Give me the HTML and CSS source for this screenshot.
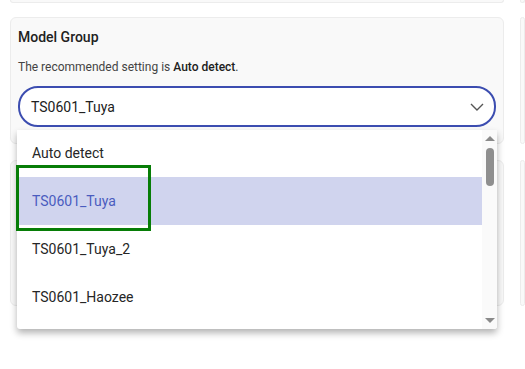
FILE: index.html
```html
<!DOCTYPE html>
<html lang="en">

<head>
    <meta charset="UTF-8">
    <meta name="viewport" content="width=device-width, initial-scale=1.0">
    <title>Model Group</title>
    <link rel="stylesheet" href="styles.css">
</head>

<body>
    <div class="page">
        <div class="card card-top"></div>
        <div class="card card-top"></div>

        <div class="card setting">
            <div class="title">Model Group</div>
            <div class="desc">The recommended setting is <b>Auto detect</b>.</div>
            <div class="select">
                <span>TS0601_Tuya</span>
                <svg class="chevron" width="14" height="8" viewBox="0 0 14 8">
                    <path d="M1 1 L7 7 L13 1" fill="none" stroke="#555" stroke-width="1.4" />
                </svg>
            </div>
            <!-- 下拉菜单 -->
            <div class="dropdown">
                <ul class="options">
                    <li>Auto detect</li>
                    <li class="active">TS0601_Tuya</li>
                    <li>TS0601_Tuya_2</li>
                    <li>TS0601_Haozee</li>
                </ul>
                <div class="scrollbar">
                    <span class="arrow up"></span>
                    <span class="thumb"></span>
                    <span class="arrow down"></span>
                </div>
            </div>
            <div class="focus"></div>
        </div>
        <div class="card"></div>

        <div class="card card-low"></div>
        <div class="card card-low"></div>
    </div>
</body>

</html>
```

FILE: styles.css
```css
* {
    padding: 0;
    margin: 0;
    box-sizing: border-box;
}

body {
    min-height: 100vh;
    background-color: #fff;
    font-family: Roboto, "Liberation Sans", sans-serif;
    color: #212121;
}

.page {
    display: grid;
    grid-template-columns: 494px 1fr;
    column-gap: 16px;
    row-gap: 14px;
    padding: 0 0 70px 10px;
}

.card {
    background-color: #f9f9f9;
    border: 1px solid #ececec;
    border-radius: 6px;
}

/* 上一张卡片只露出底边 */
.card-top {
    height: 3px;
    border-top: none;
    border-radius: 0 0 6px 6px;
}

.card-low {
    height: 146px;
    margin-top: 2px;
}

.setting {
    position: relative;
    padding: 9px 7px 16px 7px;
}

.title {
    font-size: 14px;
    font-weight: 500;
    line-height: 20px;
}

.desc {
    margin-top: 12px;
    font-size: 12px;
    line-height: 16px;
    color: #444;
}

.desc b {
    font-weight: 500;
    color: #212121;
}

.select {
    display: flex;
    align-items: center;
    justify-content: space-between;
    margin-top: 11px;
    height: 41px;
    padding: 0 10px 0 11px;
    background-color: #fff;
    border: 2px solid #3c4db0;
    border-radius: 20px;
    font-size: 14px;
    color: #212121;
}

.chevron {
    display: block;
}

/* 下拉菜单 */
.dropdown {
    position: absolute;
    top: 112px;
    left: 6px;
    width: 480px;
    height: 199px;
    display: flex;
    background-color: #fff;
    border-radius: 0 0 3px 3px;
    box-shadow: 0 4px 7px rgba(0, 0, 0, .3);
    overflow: hidden;
    z-index: 5;
}

.options {
    flex: 1;
    list-style: none;
}

.options li {
    height: 48px;
    line-height: 48px;
    padding-left: 15px;
    font-size: 14px;
    color: #262626;
}

.options li:first-child {
    height: 47px;
    line-height: 46px;
}

.options .active {
    background-color: #d0d4ee;
    color: #4a5cbf;
}

.scrollbar {
    width: 15px;
    display: flex;
    flex-direction: column;
    align-items: center;
    background-color: #fafafa;
}

.arrow {
    width: 0;
    height: 0;
    border-left: 5px solid transparent;
    border-right: 5px solid transparent;
}

.arrow.up {
    margin-top: 6px;
    border-bottom: 5px solid #8a8a8a;
}

.arrow.down {
    margin-top: auto;
    margin-bottom: 6px;
    border-top: 5px solid #8a8a8a;
}

.thumb {
    margin-top: 7px;
    width: 8px;
    height: 38px;
    border-radius: 4px;
    background-color: #8f8f8f;
}

.focus {
    position: absolute;
    top: 147px;
    left: 5px;
    width: 135px;
    height: 66px;
    border: 3px solid #077d07;
    z-index: 6;
}
```
